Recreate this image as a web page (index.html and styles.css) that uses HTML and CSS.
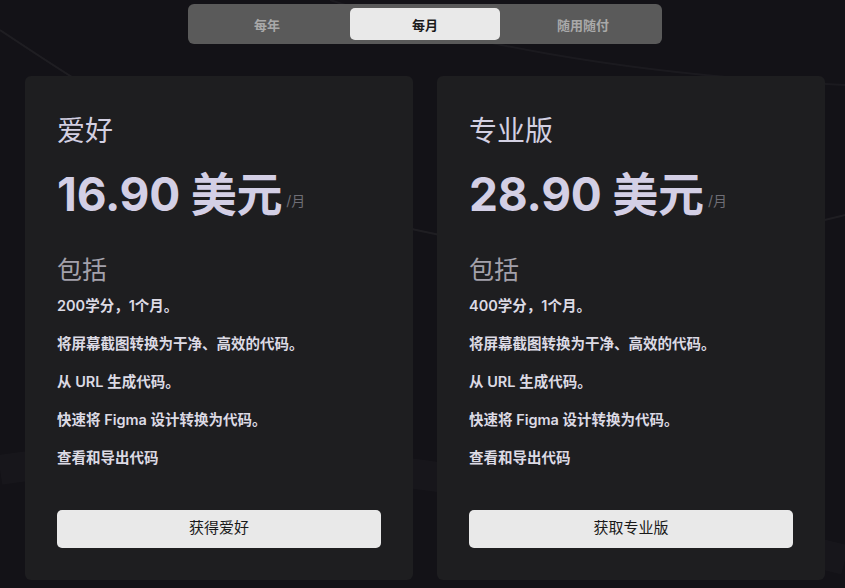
FILE: index.html
```html
<!DOCTYPE html>
<html lang="zh-CN">
<head>
<meta charset="utf-8">
<title>定价</title>
<link rel="stylesheet" href="styles.css">
</head>
<body>
<svg class="bg-deco" width="845" height="588" viewBox="0 0 845 588" aria-hidden="true">
  <path d="M0 30 C 120 110, 260 200, 440 235 S 700 250, 845 215" fill="none" stroke="#ffffff" stroke-opacity="0.05" stroke-width="2"/>
  <path d="M330 0 C 450 40, 620 75, 845 85" fill="none" stroke="#ffffff" stroke-opacity="0.035" stroke-width="2"/>
  <path d="M0 470 C 200 440, 450 460, 845 560" fill="none" stroke="#ffffff" stroke-opacity="0.02" stroke-width="30"/>
</svg>
<main class="page">
  <div class="toggle">
    <div class="tab">每年</div>
    <div class="tab active">每月</div>
    <div class="tab">随用随付</div>
  </div>
  <div class="cards">
    <section class="card">
      <h2 class="plan">爱好</h2>
      <div class="price"><span class="amount">16.90 美元</span><span class="per">/月</span></div>
      <h3 class="inc">包括</h3>
      <ul class="features">
        <li>200学分，1个月。</li>
        <li>将屏幕截图转换为干净、高效的代码。</li>
        <li>从 URL 生成代码。</li>
        <li>快速将 Figma 设计转换为代码。</li>
        <li>查看和导出代码</li>
      </ul>
      <button class="btn">获得爱好</button>
    </section>
    <section class="card">
      <h2 class="plan">专业版</h2>
      <div class="price"><span class="amount">28.90 美元</span><span class="per">/月</span></div>
      <h3 class="inc">包括</h3>
      <ul class="features">
        <li>400学分，1个月。</li>
        <li>将屏幕截图转换为干净、高效的代码。</li>
        <li>从 URL 生成代码。</li>
        <li>快速将 Figma 设计转换为代码。</li>
        <li>查看和导出代码</li>
      </ul>
      <button class="btn">获取专业版</button>
    </section>
  </div>
</main>
</body>
</html>
```
FILE: styles.css
```css
* { box-sizing: border-box; }
html, body {
  margin: 0;
  padding: 0;
  width: 845px;
  height: 588px;
  overflow: hidden;
  background: #131217;
  font-family: Inter, "Noto Sans CJK SC", sans-serif;
}
.bg-deco {
  position: absolute;
  left: 0;
  top: 0;
  pointer-events: none;
}
.page {
  position: relative;
  padding: 4px 20px 0 25px;
  display: flex;
  flex-direction: column;
  align-items: center;
}
.toggle {
  display: grid;
  grid-template-columns: 150px 150px 150px;
  gap: 8px;
  padding: 4px;
  background: #5a5a5a;
  border-radius: 6px;
  width: 474px;
  height: 40px;
}
.tab {
  display: flex;
  align-items: center;
  justify-content: center;
  font-size: 13px;
  font-weight: 700;
  color: #a9a9a9;
  border-radius: 5px;
}
.tab.active {
  background: #e9e9e9;
  color: #1b1b1b;
}
.cards {
  margin-top: 32px;
  display: flex;
  gap: 24px;
  align-self: flex-start;
}
.card {
  width: 388px;
  height: 504px;
  background: #1e1e20;
  border-radius: 6px;
  padding: 35px 32px 32px;
  display: flex;
  flex-direction: column;
}
.plan {
  margin: 0;
  font-size: 28px;
  line-height: 40px;
  font-weight: 400;
  color: #d3d0e2;
}
.price {
  margin-top: 19px;
  display: flex;
  align-items: flex-end;
  color: #d3cfe5;
}
.amount {
  font-size: 46px;
  line-height: 48px;
  font-weight: 700;
  letter-spacing: -0.2px;
}
.per {
  font-size: 14px;
  line-height: 20px;
  color: #6f6e76;
  margin-left: 4px;
  margin-bottom: 7px;
}
.inc {
  margin: 35px 0 0;
  font-size: 25px;
  line-height: 35px;
  font-weight: 400;
  color: #a3a1ab;
}
.features {
  list-style: none;
  margin: 8px 0 0;
  padding: 0;
  display: flex;
  flex-direction: column;
  gap: 18px;
}
.features li {
  font-size: 14.5px;
  line-height: 20px;
  font-weight: 600;
  color: #dcdae4;
}
.btn {
  margin-top: auto;
  height: 38px;
  width: 100%;
  padding: 0 0 3px;
  border: none;
  border-radius: 5px;
  background: #e9e9e9;
  color: #1a1a1a;
  font-family: Inter, "Noto Sans CJK SC", sans-serif;
  font-size: 15px;
  line-height: 20px;
}
```
